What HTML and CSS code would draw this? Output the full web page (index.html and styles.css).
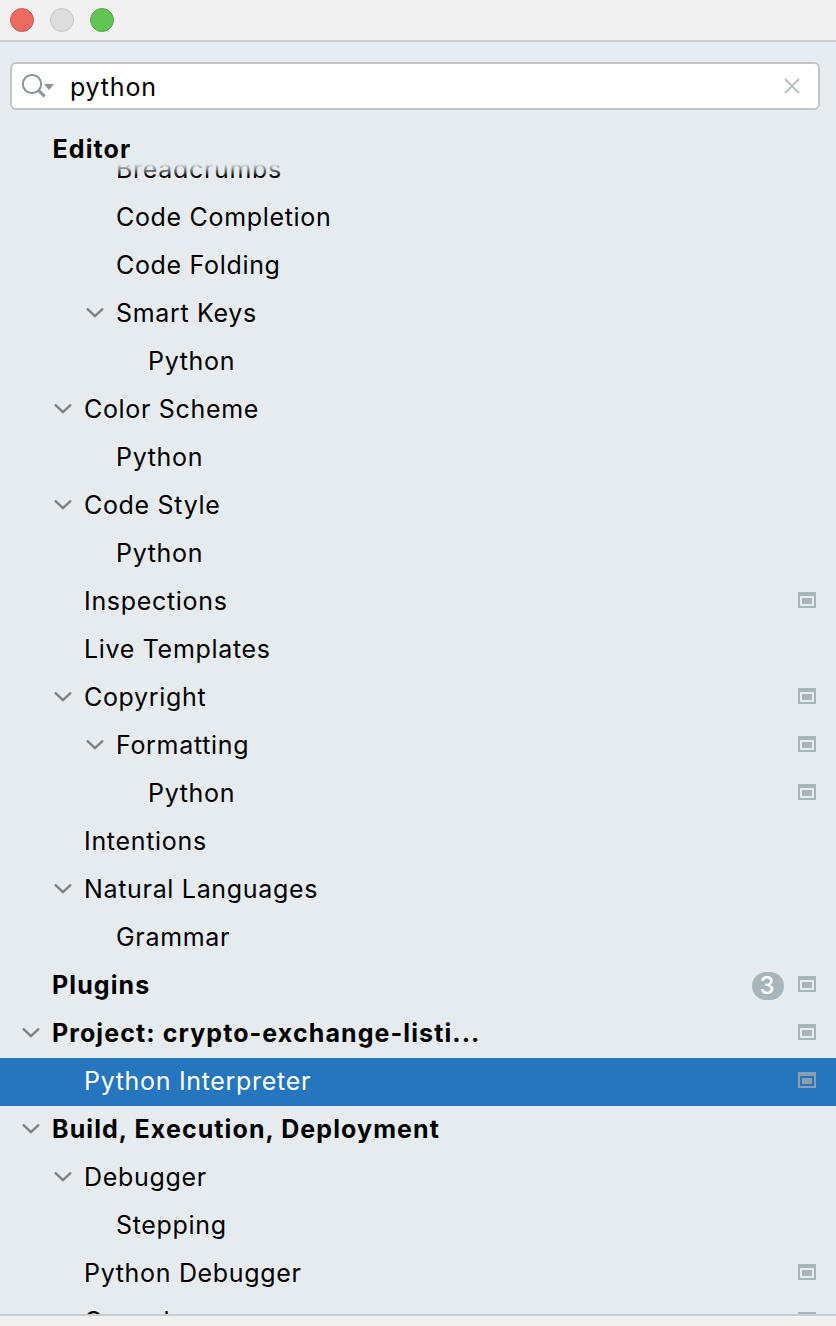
FILE: index.html
```html
<!DOCTYPE html>
<html lang="en">
<head>
<meta charset="utf-8">
<title>Settings</title>
<link rel="stylesheet" href="styles.css">
</head>
<body>
<svg width="0" height="0" class="defs">
  <symbol id="chev" viewBox="0 0 20 12"><path d="M2.6 2.2 10 9.2l7.4-7" fill="none" stroke="currentColor" stroke-width="2.4" stroke-linecap="round"/></symbol>
  <symbol id="proj" viewBox="0 0 18 16"><path fill-rule="evenodd" d="M0 0h18v16H0zM2 4v10h14V4z" fill="currentColor"/><path d="M4 6h10v6H4z" fill="currentColor"/></symbol>
</svg>
<div class="window">
  <header class="titlebar"><span class="dot red"></span><span class="dot gray"></span><span class="dot green"></span></header>
  <div class="search">
    <svg class="glass" width="36" height="28" viewBox="0 0 36 28"><circle cx="12" cy="12" r="9.1" fill="none" stroke="#8b959e" stroke-width="2"/><path d="M18.2 18.2 24.6 24.4" stroke="#8b959e" stroke-width="3"/><path d="M24 12h10l-5 6z" fill="#8b959e"/></svg>
    <span class="query">python</span>
    <svg class="clear" width="16" height="16" viewBox="0 0 16 16"><path d="M1 1l14 14M15 1 1 15" stroke="#b9c1c5" stroke-width="1.9"/></svg>
  </div>
  <main class="tree">
    <div class="sticky">Editor</div>
    <div class="row l3"><span class="label">Breadcrumbs</span></div>
    <div class="row l3"><span class="label">Code Completion</span></div>
    <div class="row l3"><span class="label">Code Folding</span></div>
    <div class="row l3"><svg class="chev"><use href="#chev"/></svg><span class="label">Smart Keys</span></div>
    <div class="row l4"><span class="label">Python</span></div>
    <div class="row l2"><svg class="chev"><use href="#chev"/></svg><span class="label">Color Scheme</span></div>
    <div class="row l3"><span class="label">Python</span></div>
    <div class="row l2"><svg class="chev"><use href="#chev"/></svg><span class="label">Code Style</span></div>
    <div class="row l3"><span class="label">Python</span></div>
    <div class="row l2"><span class="label">Inspections</span><svg class="proj"><use href="#proj"/></svg></div>
    <div class="row l2"><span class="label">Live Templates</span></div>
    <div class="row l2"><svg class="chev"><use href="#chev"/></svg><span class="label">Copyright</span><svg class="proj"><use href="#proj"/></svg></div>
    <div class="row l3"><svg class="chev"><use href="#chev"/></svg><span class="label">Formatting</span><svg class="proj"><use href="#proj"/></svg></div>
    <div class="row l4"><span class="label">Python</span><svg class="proj"><use href="#proj"/></svg></div>
    <div class="row l2"><span class="label">Intentions</span></div>
    <div class="row l2"><svg class="chev"><use href="#chev"/></svg><span class="label">Natural Languages</span></div>
    <div class="row l3"><span class="label">Grammar</span></div>
    <div class="row l1 bold"><span class="label">Plugins</span><span class="badge">3</span><svg class="proj"><use href="#proj"/></svg></div>
    <div class="row l1 bold"><svg class="chev"><use href="#chev"/></svg><span class="label">Project: crypto-exchange-listi...</span><svg class="proj"><use href="#proj"/></svg></div>
    <div class="row l2 selected"><span class="label">Python Interpreter</span><svg class="proj"><use href="#proj"/></svg></div>
    <div class="row l1 bold"><svg class="chev"><use href="#chev"/></svg><span class="label">Build, Execution, Deployment</span></div>
    <div class="row l2"><svg class="chev"><use href="#chev"/></svg><span class="label">Debugger</span></div>
    <div class="row l3"><span class="label">Stepping</span></div>
    <div class="row l2"><span class="label">Python Debugger</span><svg class="proj"><use href="#proj"/></svg></div>
    <div class="row l2"><span class="label">Console</span><svg class="proj"><use href="#proj"/></svg></div>
  </main>
  <footer class="footer"></footer>
</div>
</body>
</html>
```
FILE: styles.css
```css
* { box-sizing: border-box; }
body { margin: 0; background: #e6ebef; color: #000; font-family: Inter, "Liberation Sans", sans-serif; font-size: 25px; letter-spacing: 0.68px; }
.defs { position: absolute; }
.window { width: 836px; height: 1326px; display: flex; flex-direction: column; overflow: hidden; }
.titlebar { flex: none; height: 42px; padding: 8px 10px; display: flex; gap: 16px; background: #f1f1f1; border-bottom: 2px solid #cbcccd; }
.dot { width: 24px; height: 24px; border-radius: 50%; border: 1px solid; }
.red { background: #ed6a5e; border-color: #d8574c; }
.gray { background: #dddddd; border-color: #c4c4c4; }
.green { background: #61c454; border-color: #50ac43; }
.search { flex: none; height: 48px; margin: 20px 16px 16px 10px; padding: 0 18px 0 8px; display: flex; align-items: center; background: #fff; border: 2px solid #c4c4c4; border-radius: 6px; }
.glass { flex: none; }
.query { flex: 1; margin-left: 14px; padding-top: 2px; line-height: 42px; letter-spacing: 0.8px; }
.tree { flex: none; height: 1188px; overflow: hidden; }
.sticky { position: relative; z-index: 1; height: 50px; margin-bottom: -30px; padding-left: 52.5px; line-height: 46px; font-weight: 700; letter-spacing: 1.1px; background: linear-gradient(#e6ebef 38px, #e6ebef00 50px); }
.row { height: 48px; display: flex; align-items: center; padding-right: 20px; line-height: 46px; white-space: nowrap; }
.l1 { padding-left: 52px; }
.l2 { padding-left: 84px; }
.l3 { padding-left: 116px; }
.l4 { padding-left: 148px; }
.label { flex: 1; height: 48px; }
.chev { flex: none; width: 20px; height: 12px; margin: 0 11px 2px -31px; color: #808080; }
.proj { flex: none; width: 18px; height: 16px; margin: 0 0 4px 14px; color: #a9b5bd; }
.bold { font-weight: 700; letter-spacing: 1.09px; }
.selected { background: #2675bf; color: #fff; }
.selected .proj { color: #8c9fae; }
.badge { width: 32px; height: 28px; padding-right: 2px; line-height: 28px; border-radius: 14px; background: #a9b5bd; color: #fff; text-align: center; font-size: 24px; font-weight: 500; letter-spacing: 0; }
.footer { flex: 1; background: #f1f1f1; border-top: 2px solid #cbcccd; }
```
